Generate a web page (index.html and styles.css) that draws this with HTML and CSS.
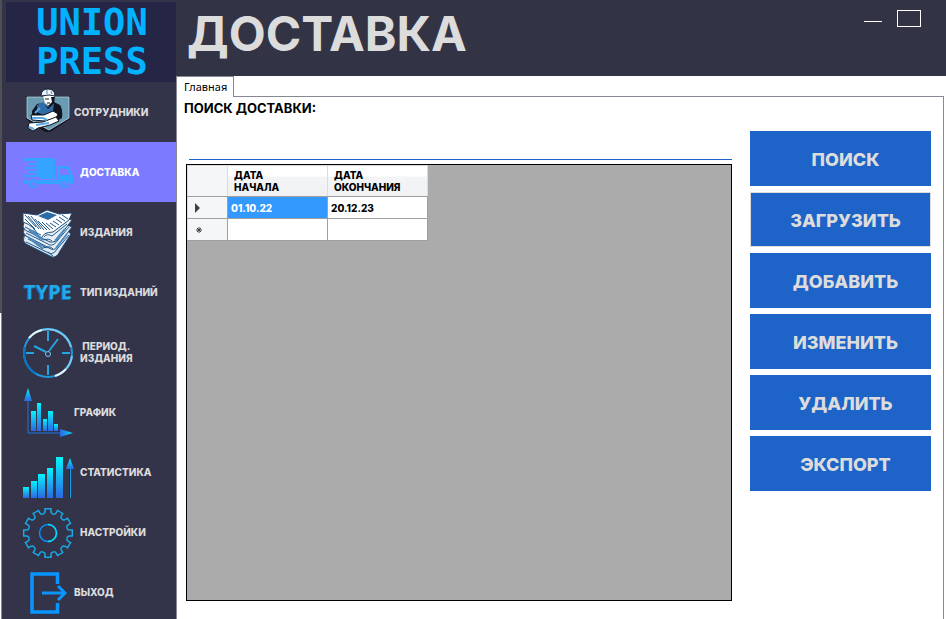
FILE: index.html
```html
<!DOCTYPE html>
<html lang="ru">
<head>
<meta charset="utf-8">
<title>Union Press</title>
<link rel="stylesheet" href="styles.css">
</head>
<body>
<aside class="sidebar">
  <div class="brand">UNION<br>PRESS</div>
  <nav class="menu">
    <a class="item tight" href="#">
      <svg class="icon" viewBox="0 0 50 50" aria-hidden="true">
        <path d="M3 9H47V32L27 45L22 45L3 32Z" fill="#10141f"/>
        <path d="M4 10H46V31L26 43L4 31Z" fill="#6b9bb3" stroke="#a5c6d3" stroke-width="1"/>
        <path d="M9 24L14 17L20 16L25 20L31 15L37 18Q40 22 39 31L34 34L22 34L9 31Z" fill="#10151f"/>
        <path d="M14 18L20 15L25 22L31 16L30 24L20 28L14 25Z" fill="#2f6ca8"/>
        <path d="M20 8H31L31 15L27 19L22 16Z" fill="#fff"/>
        <path d="M28 10H32L31 16L27 20L25 19L29 15Z" fill="#10151f"/>
        <path d="M22 12H26M24 16H27" stroke="#10151f"/>
        <path d="M18 9Q18 2 25 2Q32 2 32 9L26 8Z" fill="#edf5fb" stroke="#16243a" stroke-width="1"/>
        <path d="M24 3V7M28 4L29 7" stroke="#4d8dbf" stroke-width="1"/>
        <path d="M8 28L21 28L30 24L35 27L33 31L22 34L9 33Z" fill="#fff" stroke="#10151f"/>
        <path d="M6 36L20 35L33 30L36 34L27 38L15 41L10 44L5 41Z" fill="#fff" stroke="#10151f"/>
        <path d="M9 31L20 31L24 33M12 26L17 21M13 38L26 36M6 40L11 42" fill="none" stroke="#5ba9e6" stroke-width="2"/>
      </svg>
      <span>СОТРУДНИКИ</span>
    </a>
    <a class="item active" href="#" aria-current="page">
      <svg class="icon" viewBox="0 0 50 50" aria-hidden="true">
        <g fill="#35a4ff">
          <path d="M3 11H30Q32 11 32 13V32H16V30H1V28H13V26H5V24H15V22H2V20H13V18H4V16H14V14H1V12Z"/>
          <path d="M1 33H50V37H46A5 5 0 0 0 36 37H15A5 5 0 0 0 5 37H1Z"/>
          <path fill-rule="evenodd" d="M34 19H44Q46 19 47 22L50 29V34H34ZM37 21V28H47L44 22Z"/>
        </g>
        <g fill="#7c7bff" stroke="#35a4ff" stroke-width="2"><circle cx="10" cy="37" r="3"/><circle cx="41" cy="37" r="3"/></g>
      </svg>
      <span>ДОСТАВКА</span>
    </a>
    <a class="item" href="#">
      <svg class="icon" viewBox="0 0 50 50" aria-hidden="true">
        <g stroke="#1d4a75" stroke-width="1">
          <path d="M1 29Q-1 34 3 37L29 50Q34 51 37 44L48 27L40 20Z" fill="#dfe9f1"/>
          <path d="M1 22Q-1 26 3 29L28 42Q33 44 36 37L49 20L39 16Z" fill="#e8f0f6"/>
          <path d="M1 14L0 20Q2 24 6 25L27 35Q33 36 36 30L49 13L38 10Z" fill="#e8f0f6"/>
          <path d="M0 6L14 8L24 3L36 7L49 6L46 13L30 25Q20 25 18 32L15 29Q12 19 0 15Z" fill="#fff"/>
        </g>
        <path d="M15 9L24 5L34 8L25 13Z" fill="#2b6ca5"/>
        <path d="M2 8L13 20M5 9L16 22M8 9L18 22M12 12L21 23M15 14L24 23M19 15L27 23M23 16L30 22M27 16L33 20M30 14L36 18M33 12L39 16M36 10L42 14M39 8L45 12M2 12L12 22" stroke="#1f5a91" stroke-width="1"/>
        <path d="M21 30Q24 26 29 29L44 17M2 20L18 28M3 26L27 38Q31 39 35 33L46 20M5 32L24 41M3 35L28 47Q32 46 35 41L46 28M20 33Q26 31 29 34M20 41Q27 38 30 42M25 45L30 49" fill="none" stroke="#1f5a91" stroke-width="1"/>
        <path d="M6 23L18 32M10 24L20 33M5 30L16 39M9 32L20 42M32 34L42 22M33 41L44 27" stroke="#4d8bbd" stroke-width="2"/>
      </svg>
      <span>ИЗДАНИЯ</span>
    </a>
    <a class="item" href="#">
      <span class="icon type-mark" aria-hidden="true">TYPE</span>
      <span>ТИП ИЗДАНИЙ</span>
    </a>
    <a class="item" href="#">
      <svg class="icon" viewBox="0 0 50 50" aria-hidden="true">
        <circle cx="25" cy="26" r="24" fill="none" stroke="#2396d8" stroke-width="2"/>
        <path d="M13 47A24 24 0 0 1 2 20" fill="none" stroke="#0874c4" stroke-width="2"/>
        <path d="M6 11A24 24 0 0 1 19 3" fill="none" stroke="#eaf6fc" stroke-width="2"/>
        <path d="M19 3A24 24 0 0 1 48 20M43 42A24 24 0 0 0 49 29" fill="none" stroke="#75c8ef" stroke-width="2"/>
        <path d="M32 49A24 24 0 0 0 43 42" fill="none" stroke="#eaf6fc" stroke-width="2"/>
        <path d="M25 4V14M25 38V48M3 26H11M39 26H47M23 25L11 19M26 24L35 12" fill="none" stroke="#25a4e2" stroke-width="2"/>
        <circle cx="25" cy="27" r="2.500" fill="#33334a" stroke="#76c9ee" stroke-width="1"/>
      </svg>
      <span>ПЕРИОД.<br>ИЗДАНИЯ</span>
    </a>
    <a class="item tight" href="#">
      <svg class="icon" viewBox="0 0 50 50" aria-hidden="true">
        <defs>
          <linearGradient id="bar" x1="0" y1="0" x2="0" y2="1"><stop stop-color="#05f4fc"/><stop offset="1" stop-color="#2c68e2"/></linearGradient>
          <linearGradient id="side"><stop stop-color="#2c68e2"/><stop offset="1" stop-color="#05d9fc"/></linearGradient>
        </defs>
        <path d="M5 13V46H38" fill="none" stroke="#1878dc" stroke-width="1"/>
        <path d="M5 1L9 14H1Z" fill="url(#bar)"/>
        <path d="M37 42L50 46L37 50Z" fill="url(#side)"/>
        <g fill="url(#bar)"><path d="M8 24H13V44H8Z"/><path d="M14 16H18V44H14Z"/><path d="M20 32H24V44H20Z"/><path d="M25 24H30V44H25Z"/><path d="M31 37H35V44H31Z"/></g>
      </svg>
      <span>ГРАФИК</span>
    </a>
    <a class="item" href="#">
      <svg class="icon" viewBox="0 0 50 50" aria-hidden="true">
        <g fill="url(#bar)"><path d="M0 40H6V51H0Z"/><path d="M8 34H14V51H8Z"/><path d="M15 27H22V51H15Z"/><path d="M24 21H30V51H24Z"/><path d="M33 10H40V51H33Z"/><path d="M47 11L51 22H43Z"/></g>
        <path d="M46.500 22V51" stroke="#101e91" stroke-width="1"/><path d="M47.500 22V51" stroke="#159fed" stroke-width="1"/>
      </svg>
      <span>СТАТИСТИКА</span>
    </a>
    <a class="item" href="#">
      <svg class="icon" viewBox="0 0 50 50" aria-hidden="true">
        <defs><path id="tooth" d="M-5.200 -19.300C-3.800 -19 -3 -20 -3 -21.500V-24.300H3V-21.500C3 -20 3.800 -19 5.200 -19.300"/></defs>
        <g transform="translate(25 26)" fill="none" stroke="#18a9e6" stroke-width="1.500">
          <use href="#tooth"/><use href="#tooth" transform="rotate(30)"/><use href="#tooth" transform="rotate(60)"/><use href="#tooth" transform="rotate(90)"/><use href="#tooth" transform="rotate(120)"/><use href="#tooth" transform="rotate(150)"/><use href="#tooth" transform="rotate(180)"/><use href="#tooth" transform="rotate(210)"/><use href="#tooth" transform="rotate(240)"/><use href="#tooth" transform="rotate(270)"/><use href="#tooth" transform="rotate(300)"/><use href="#tooth" transform="rotate(330)"/>
          <circle r="8.500" stroke="#0b91f7"/><path d="M0 -8.500A8.500 8.500 0 0 1 0 8.500" stroke="#08dbf5"/>
        </g>
      </svg>
      <span>НАСТРОЙКИ</span>
    </a>
    <a class="item tight" href="#">
      <svg class="icon" viewBox="0 0 50 50" aria-hidden="true">
        <path d="M34.500 17V7H9V45H34.500V36" fill="none" stroke="#0895ff" stroke-width="3.500"/>
        <path d="M19 26H42M35 19L42 26L35 33" fill="none" stroke="#0895ff" stroke-width="3"/>
      </svg>
      <span>ВЫХОД</span>
    </a>
  </nav>
</aside>
<div class="main">
  <header class="header">
    <h1>ДОСТАВКА</h1>
    <div class="window-controls">
      <button class="minimize" type="button" aria-label="Свернуть"></button>
      <button class="maximize" type="button" aria-label="Развернуть"></button>
    </div>
  </header>
  <div class="tabs"><button class="tab" type="button">Главная</button></div>
  <main class="panel">
    <section class="browser">
      <label for="search">ПОИСК ДОСТАВКИ:</label>
      <input id="search" class="search" type="text">
      <div class="grid">
        <table>
          <thead><tr><th></th><th>ДАТА<br>НАЧАЛА</th><th>ДАТА<br>ОКОНЧАНИЯ</th></tr></thead>
          <tbody>
            <tr><th><svg class="marker" viewBox="0 0 8 10" aria-hidden="true"><path d="M1 0L6 5L1 10Z" fill="#404040"/></svg></th><td class="selected">01.10.22</td><td>20.12.23</td></tr>
            <tr><th><svg class="marker new" viewBox="0 0 8 10" aria-hidden="true"><path d="M4 2V8M1 5H7M2 3L6 7M6 3L2 7" stroke="#404040"/></svg></th><td></td><td></td></tr>
          </tbody>
        </table>
      </div>
    </section>
    <div class="actions">
      <button type="button">ПОИСК</button>
      <button class="focused" type="button">ЗАГРУЗИТЬ</button>
      <button type="button">ДОБАВИТЬ</button>
      <button type="button">ИЗМЕНИТЬ</button>
      <button type="button">УДАЛИТЬ</button>
      <button type="button">ЭКСПОРТ</button>
    </div>
  </main>
</div>
</body>
</html>
```
FILE: styles.css
```css
* { box-sizing: border-box; }

body {
  display: flex;
  height: 100vh;
  margin: 0;
  overflow: hidden;
  background: #fff;
  font-family: Inter, "Noto Sans", sans-serif;
}

button, input { font: inherit; }

.sidebar {
  flex: none;
  width: 176px;
  padding: 2px 0 0 6px;
  background:
    linear-gradient(#505052 313px, #fff 313px) 0 0 / 1px 100% no-repeat,
    linear-gradient(#505052 313px, #88888f 313px) 1px 0 / 1px 100% no-repeat,
    #33334a;
}

.brand {
  height: 80px;
  padding: 1px 0 0 2px;
  background: #252545;
  color: #00b2ff;
  font: bold 37px/39px "DejaVu Sans Mono", monospace;
  text-align: center;
}

.item {
  display: flex;
  align-items: center;
  gap: 7px;
  height: 60px;
  padding-left: 17px;
  color: #dcdcdc;
  font-size: 10px;
  font-weight: 800;
  line-height: 12px;
  text-align: center;
  text-decoration: none;
  white-space: nowrap;
}

.tight { gap: 1px; }
.active { background: #7c7bff; color: #fff; }

.icon {
  flex: none;
  width: 50px;
  height: 50px;
  overflow: visible;
}

.type-mark {
  color: #26a8e8;
  font: 700 20px/50px "Open Sans", sans-serif;
  text-shadow: -1px 1px #0871b8;
}

.main {
  display: flex;
  flex: 1;
  flex-direction: column;
  min-width: 0;
}

.header {
  display: flex;
  flex: none;
  justify-content: space-between;
  height: 76px;
  padding: 0 25px 0 11px;
  background: #333346;
}

h1 {
  margin: 0;
  color: #dcdcdc;
  font-size: 48px;
  font-weight: 700;
  line-height: 68px;
}

.window-controls {
  display: flex;
  gap: 15px;
  padding-top: 10px;
}

.window-controls button {
  padding: 0;
  border: 0 solid #fff;
  background: none;
}

.window-controls .minimize { width: 18px; height: 12px; border-bottom-width: 1px; }
.window-controls .maximize { width: 24px; height: 17px; border-width: 1px; }

.tabs {
  display: flex;
  flex: none;
  height: 20px;
}

.tab {
  z-index: 1;
  height: 21px;
  padding: 0 6px 0 7px;
  border: 1px solid #888895;
  border-bottom: 0;
  background: #fff;
  color: #000;
  font: 11px/18px "Noto Sans", sans-serif;
}

.panel {
  display: flex;
  flex: 1;
  gap: 18px;
  min-height: 0;
  margin-right: 2px;
  padding: 2px 12px 18px 9px;
  border: 1px solid #888895;
  border-bottom: 0;
}

.browser {
  display: flex;
  flex: 1;
  flex-direction: column;
  min-width: 0;
}

label {
  margin-left: -2px;
  font-size: 13px;
  font-weight: 700;
  line-height: 18px;
}

.search {
  height: 43px;
  margin: 0 0 4px 3px;
  padding: 0;
  border: 0;
  border-bottom: 1px solid #1e64c8;
  outline: 0;
}

.grid {
  flex: 1;
  border: 1px solid #000;
  background: #ababab;
}

table {
  width: 241px;
  border-collapse: collapse;
  table-layout: fixed;
  font-size: 10px;
  line-height: 12px;
}

th, td {
  height: 22px;
  padding: 0 0 0 3px;
  border: 1px solid #a0a0a0;
  background: #fff;
  font-weight: 800;
  text-align: left;
}

th:first-child { width: 40px; background: #f5f6f8; }

thead th {
  height: 31px;
  padding-left: 6px;
  border-right-color: #dcdcdf;
  background: linear-gradient(#fff 35%, #f3f4f6 35%, #f0f1f3);
}

th:first-child, thead th { border-top-color: #dcdcdf; border-left-color: #dcdcdf; }
tbody .selected { background: #3399ff; color: #fff; }

.marker { display: block; width: 8px; height: 10px; margin-left: 3px; }
.marker.new { margin-left: 4px; }

.actions {
  display: flex;
  flex: 0 0 181px;
  flex-direction: column;
  gap: 6px;
  padding-top: 32px;
}

.actions button {
  height: 55px;
  padding: 2px 0 0 10px;
  border: 0;
  background: #1e64c8;
  color: #dcdcdc;
  font-size: 18px;
  font-weight: 800;
}

.actions .focused { border: 1px solid #dcdcdc; }
```
